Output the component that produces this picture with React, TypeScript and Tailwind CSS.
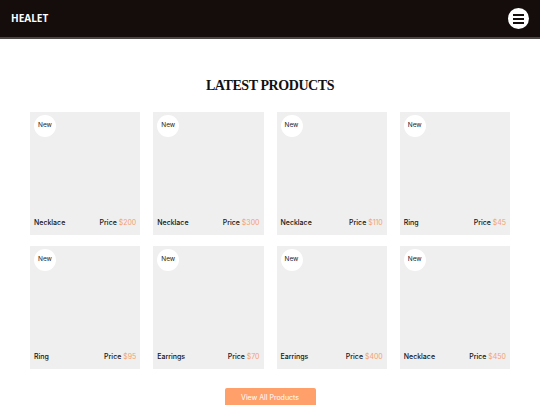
import React from "react";

const products = [
  { name: "Necklace", price: "$200" },
  { name: "Necklace", price: "$300" },
  { name: "Necklace", price: "$110" },
  { name: "Ring", price: "$45" },
  { name: "Ring", price: "$95" },
  { name: "Earrings", price: "$70" },
  { name: "Earrings", price: "$400" },
  { name: "Necklace", price: "$450" },
];

export default function App() {
  return (
    <div className="min-h-[405px] bg-white" style={{ fontFamily: "Inter, 'Open Sans', sans-serif" }}>
      <header className="h-[39px] bg-[#150d0b] border-b-2 border-[#4a4644] flex items-center justify-between pl-[11px] pr-[11px]">
        <span className="text-white font-bold text-[10px]" style={{ fontFamily: "'Open Sans', sans-serif" }}>HEALET</span>
        <button className="w-[21px] h-[21px] rounded-full bg-white flex flex-col items-center justify-center gap-[2px]">
          <span className="block w-[11px] h-[2px] bg-[#150d0b]" />
          <span className="block w-[11px] h-[2px] bg-[#150d0b]" />
          <span className="block w-[11px] h-[2px] bg-[#150d0b]" />
        </button>
      </header>
      <main className="px-[30px] pt-[40px]">
        <h1 className="text-center text-[14px] font-bold text-[#111] tracking-[-0.03em] leading-none" style={{ fontFamily: "'Liberation Serif', 'DejaVu Serif', serif" }}>
          LATEST PRODUCTS
        </h1>
        <div className="grid grid-cols-4 gap-x-[13px] gap-y-[11px] mt-[19px]">
          {products.map((p, i) => (
            <div key={i} className="h-[123px] bg-[#efefef] flex flex-col justify-between px-[4px] pt-[3px] pb-[7px]">
              <div className="w-[22px] h-[22px] rounded-full bg-white flex items-center justify-center text-[6.5px] text-[#222]">
                New
              </div>
              <div className="flex justify-between items-center text-[7px] font-medium text-[#111]">
                <span>{p.name}</span>
                <span>
                  Price <span className="text-[#f5a070] font-normal">{p.price}</span>
                </span>
              </div>
            </div>
          ))}
        </div>
        <div className="flex justify-center mt-[19px]">
          <button className="w-[91px] h-[22px] bg-[#ff9f6a] text-white text-[7px] rounded-t-[2px] flex items-start justify-center pt-[5px]">
            View All Products
          </button>
        </div>
      </main>
    </div>
  );
}
